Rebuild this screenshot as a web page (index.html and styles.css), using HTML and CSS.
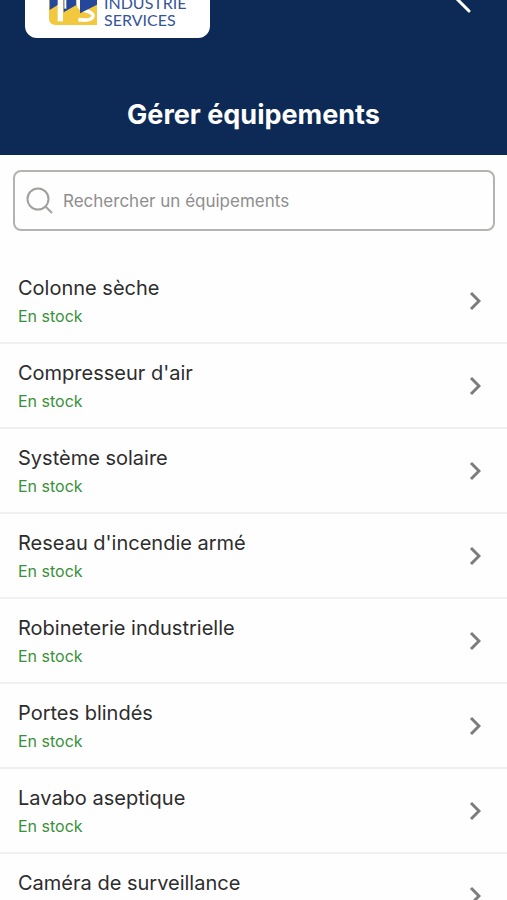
FILE: index.html
```html
<!DOCTYPE html>
<html lang="fr">
<head>
<meta charset="utf-8">
<meta name="viewport" content="width=device-width, initial-scale=1">
<title>Gérer équipements</title>
<link rel="stylesheet" href="styles.css">
</head>
<body>
<header class="header">
  <div class="topbar">
    <div class="logo">
      <svg class="logo-mark" viewBox="0 0 144 78" aria-hidden="true">
        <path fill="#f2c83f" d="M0 0H144V75H20Q0 75 0 55Z"/>
        <path fill="#24479a" d="M2 0H27V14L2 30ZM44 0H82V15L44 37Z"/>
        <path fill="none" stroke="#fff" stroke-width="16" d="M34 0V64"/>
        <path fill="none" stroke="#fff" stroke-width="6" d="M49 0V26"/>
        <path fill="none" stroke="#fff" stroke-width="11" d="M88 0V12Q90 27 110 32Q133 38 132 48Q129 64 88 59"/>
        <path fill="#24479a" d="M93 0H144V14L93 40Z"/>
      </svg>
      <div class="logo-text"><span>INDUSTRIE</span><span>SERVICES</span></div>
    </div>
    <button class="back" type="button" aria-label="Retour">
      <svg class="back-icon" viewBox="0 0 16 26" aria-hidden="true"><path d="M14 2L3 13L14 24"/></svg>
    </button>
  </div>
  <h1 class="title">Gérer équipements</h1>
</header>
<main>
  <form class="search" role="search">
    <svg class="search-icon" viewBox="0 0 28 28" aria-hidden="true"><circle cx="12" cy="12" r="10.5"/><path d="M19.5 19.5L26 26"/></svg>
    <input class="search-input" type="search" aria-label="Rechercher un équipements" placeholder="Rechercher un équipements">
  </form>
  <ul class="list">
    <li><a class="item" href="#"><span class="text"><span class="name">Colonne sèche</span><span class="stock">En stock</span></span><svg class="chevron" viewBox="0 0 12 20" aria-hidden="true"><path d="M2 2L10 10L2 18"/></svg></a></li>
    <li><a class="item" href="#"><span class="text"><span class="name">Compresseur d'air</span><span class="stock">En stock</span></span><svg class="chevron" viewBox="0 0 12 20" aria-hidden="true"><path d="M2 2L10 10L2 18"/></svg></a></li>
    <li><a class="item" href="#"><span class="text"><span class="name">Système solaire</span><span class="stock">En stock</span></span><svg class="chevron" viewBox="0 0 12 20" aria-hidden="true"><path d="M2 2L10 10L2 18"/></svg></a></li>
    <li><a class="item" href="#"><span class="text"><span class="name">Reseau d'incendie armé</span><span class="stock">En stock</span></span><svg class="chevron" viewBox="0 0 12 20" aria-hidden="true"><path d="M2 2L10 10L2 18"/></svg></a></li>
    <li><a class="item" href="#"><span class="text"><span class="name">Robineterie industrielle</span><span class="stock">En stock</span></span><svg class="chevron" viewBox="0 0 12 20" aria-hidden="true"><path d="M2 2L10 10L2 18"/></svg></a></li>
    <li><a class="item" href="#"><span class="text"><span class="name">Portes blindés</span><span class="stock">En stock</span></span><svg class="chevron" viewBox="0 0 12 20" aria-hidden="true"><path d="M2 2L10 10L2 18"/></svg></a></li>
    <li><a class="item" href="#"><span class="text"><span class="name">Lavabo aseptique</span><span class="stock">En stock</span></span><svg class="chevron" viewBox="0 0 12 20" aria-hidden="true"><path d="M2 2L10 10L2 18"/></svg></a></li>
    <li><a class="item" href="#"><span class="text"><span class="name">Caméra de surveillance</span><span class="stock">En stock</span></span><svg class="chevron" viewBox="0 0 12 20" aria-hidden="true"><path d="M2 2L10 10L2 18"/></svg></a></li>
  </ul>
</main>
</body>
</html>
```
FILE: styles.css
```css
* {
  box-sizing: border-box;
}

html {
  scrollbar-width: none;
}

body {
  margin: 0;
  background: #fefefe;
  color: #2d2d2d;
  font-family: Inter, "Liberation Sans", sans-serif;
}

.header {
  padding-bottom: 20px;
  background: #0d2a56;
  color: #fff;
  overflow: hidden;
}

.topbar {
  display: flex;
  justify-content: space-between;
  align-items: flex-end;
  height: 38px;
  margin-bottom: 57px;
  padding: 0 36px 0 25px;
}

.logo {
  display: flex;
  align-items: flex-end;
  gap: 7px;
  padding: 0 23px 10px 24px;
  border-radius: 0 0 12px 12px;
  background: #fff;
}

.logo-mark {
  width: 48px;
  height: 26px;
  margin-bottom: 2px;
}

.logo-text {
  display: flex;
  flex-direction: column;
  color: #35549b;
  font: 16px/17px Lato, sans-serif;
}

.back {
  display: flex;
  margin-bottom: 25px;
  padding: 0;
  border: 0;
  background: none;
}

.back-icon {
  width: 16px;
  height: 26px;
  fill: none;
  stroke: #fff;
  stroke-width: 3;
  stroke-linecap: round;
}

.title {
  margin: 0;
  font-size: 27px;
  line-height: 40px;
  font-weight: 700;
  text-align: center;
}

.search {
  display: flex;
  align-items: center;
  gap: 9px;
  height: 61px;
  margin: 15px 12px 28px 13px;
  padding: 0 11px;
  border: 2px solid #b3b3af;
  border-radius: 8px;
}

.search-icon {
  flex: none;
  width: 28px;
  height: 28px;
  fill: none;
  stroke: #a0a09e;
  stroke-width: 2;
}

.search-input {
  flex: 1;
  min-width: 0;
  padding: 0;
  border: 0;
  outline: 0;
  background: none;
  color: #2d2d2d;
  font: 17px/24px Inter, sans-serif;
}

.search-input::placeholder {
  color: #8e8e8e;
}

.list {
  margin: 0;
  padding: 0;
  list-style: none;
}

.item {
  display: flex;
  align-items: center;
  justify-content: space-between;
  padding: 14px 26px 13px 18px;
  border-bottom: 2px solid #f0f0f0;
  color: inherit;
  text-decoration: none;
}

.text {
  display: flex;
  flex-direction: column;
}

.name {
  font-size: 20px;
  line-height: 30px;
}

.stock {
  color: #38913a;
  font-size: 16px;
  line-height: 26px;
}

.chevron {
  flex: none;
  width: 12px;
  height: 20px;
  fill: none;
  stroke: #7c7c7c;
  stroke-width: 3;
}
```
